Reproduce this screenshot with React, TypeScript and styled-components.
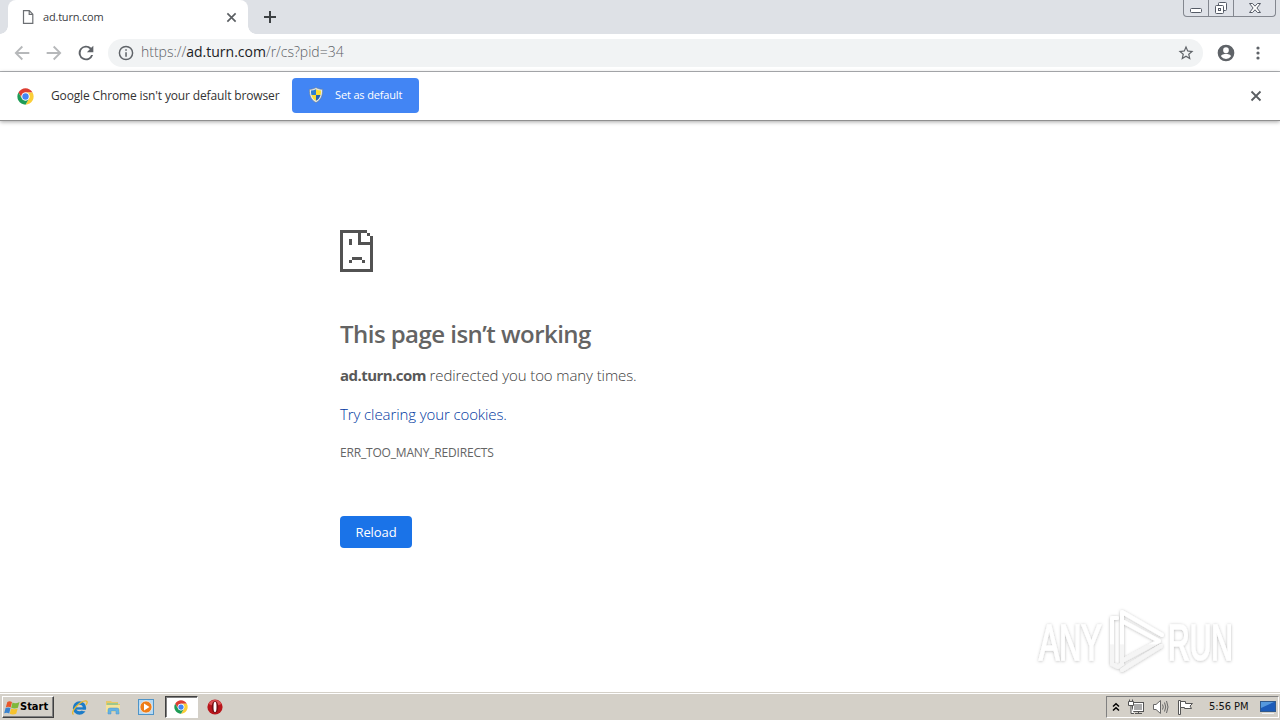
import React, { ReactNode } from "react";
import styled, { createGlobalStyle, css } from "styled-components";

const uiFont = `"Open Sans", "Noto Sans", sans-serif`;
const tahoma = `"DejaVu Sans Condensed", "DejaVu Sans", sans-serif`;

const GlobalStyle = createGlobalStyle`
    * {
        box-sizing: border-box;
    }

    body {
        margin: 0;
        overflow: hidden;
        background: #fff;
        font-family: ${uiFont};
    }

    svg {
        display: block;
        flex: none;
    }
`;

const Screen = styled.div`
    width: 1280px;
    height: 720px;
    position: relative;
    display: flex;
    flex-direction: column;
    background: #fff;
`;

const Label = styled.span<{ $size: number; $spacing?: number }>`
    ${({ $size, $spacing = 0 }) => css`
        font-size: ${$size}px;
        letter-spacing: ${$spacing}px;
        line-height: 1.36;
        white-space: nowrap;
    `}
`;

/* Tab strip */

const TabStrip = styled.header`
    flex: none;
    height: 34px;
    padding-left: 8px;
    display: flex;
    background: #dee1e6;
`;

const Tab = styled.div`
    position: relative;
    width: 240px;
    height: 34px;
    padding: 0 11px 0 14px;
    display: flex;
    align-items: center;
    border-radius: 8px 8px 0 0;
    background: #fff;
    color: #3c4043;

    &::before,
    &::after {
        content: "";
        position: absolute;
        bottom: 0;
        width: 8px;
        height: 8px;
    }

    &::before {
        left: -8px;
        background: radial-gradient(circle at 0 0, transparent 7.5px, #fff 8px);
    }

    &::after {
        right: -8px;
        background: radial-gradient(
            circle at 100% 0,
            transparent 7.5px,
            #fff 8px
        );
    }
`;

const TabTitle = styled(Label)`
    flex: 1;
    margin-left: 9px;
`;

const NewTab = styled.div`
    margin: 10px 0 0 15px;
`;

const WindowControls = styled.div`
    width: 93px;
    height: 17px;
    margin: 0 4px 0 auto;
    display: flex;
    border: 1px solid #83878f;
    border-top: 0;
    border-radius: 0 0 4px 4px;
    background: #dfe2e8;
`;

const WindowButton = styled.div<{ $width: number }>`
    width: ${({ $width }) => $width}px;
    display: flex;
    justify-content: center;

    & + & {
        border-left: 1px solid #83878f;
    }
`;

/* Toolbar */

const Toolbar = styled.nav`
    flex: none;
    height: 38px;
    padding: 0 14px;
    display: flex;
    align-items: center;
    border-bottom: 1px solid #b1b3b6;
    background: #fff;
`;

const NavButtons = styled.div`
    width: 94px;
    display: flex;
    gap: 16px;
`;

const Omnibox = styled.div`
    width: 1095px;
    height: 28px;
    padding: 0 8px 0 10px;
    display: flex;
    align-items: center;
    border-radius: 14px;
    background: #f1f3f4;
`;

const Url = styled(Label)`
    flex: 1;
    margin: 0 0 1px 7px;
    color: #5c6065;
    font-weight: 300;

    b {
        font-weight: 400;
        color: #202124;
    }
`;

const ToolbarActions = styled.div`
    margin-left: auto;
    display: flex;
    align-items: center;
    gap: 14px;
`;

/* Default browser bar */

const InfoBar = styled.div`
    flex: none;
    height: 49px;
    padding: 0 18px 0 17px;
    display: flex;
    align-items: center;
    border-bottom: 1px solid #8f8f8f;
    box-shadow: 0 1px 4px rgba(0, 0, 0, 0.35);
    background: #fff;
    color: #333;
`;

const InfoText = styled(Label)`
    width: 241px;
    margin-left: 17px;
`;

const DefaultButton = styled.button`
    width: 127px;
    height: 35px;
    margin-bottom: 2px;
    padding: 0 0 0 16px;
    display: flex;
    align-items: center;
    gap: 11px;
    border: 0;
    border-radius: 4px;
    background: #4285f4;
    color: #fff;
    font-family: inherit;
`;

const InfoClose = styled.div`
    margin-left: auto;
`;

/* Error page */

const ErrorPage = styled.main`
    flex: 1;
    padding: 109px 0 0 340px;
    display: flex;
    flex-direction: column;
    align-items: flex-start;
    color: #646464;
`;

const Title = styled.h1`
    margin: 46px 0 0;
    font-size: 24px;
    font-weight: 600;
    line-height: 32px;
    letter-spacing: -0.54px;
    white-space: nowrap;
`;

const Paragraph = styled.p<{ $top: number; $spacing: number }>`
    margin: ${({ $top }) => $top}px 0 0;
    color: #3c3c3c;
    font-size: 15px;
    font-weight: 300;
    line-height: 22px;
    letter-spacing: ${({ $spacing }) => $spacing}px;
    white-space: nowrap;
`;

const Host = styled.strong`
    color: #585858;
    font-weight: 700;
    letter-spacing: -0.55px;
`;

const CookiesLink = styled.a`
    color: #0038a0;
`;

const ErrorCode = styled.div`
    margin-top: 19px;
    font-size: 12px;
    line-height: 18px;
    letter-spacing: -0.18px;
`;

const ReloadButton = styled.button`
    width: 72px;
    height: 32px;
    margin-top: 54px;
    padding: 0;
    border: 0;
    border-radius: 4px;
    background: #1a73e8;
    color: #fff;
    font-family: inherit;
    font-size: 13px;
    letter-spacing: -0.1px;
`;

const Watermark = styled.div`
    position: absolute;
    left: 1030px;
    top: 604px;
`;

/* Taskbar */

const TaskbarRoot = styled.footer`
    flex: none;
    height: 28px;
    padding: 1px 0 0 2px;
    display: flex;
    align-items: center;
    border-top: 1px solid #d4d0c8;
    box-shadow: inset 0 1px #fff;
    background: #d4d0c8;
`;

const StartButton = styled.div`
    width: 52px;
    height: 22px;
    padding: 1px 0 0 1px;
    display: flex;
    align-items: center;
    border: 1px solid;
    border-color: #fff #404040 #404040 #fff;
    box-shadow: inset -1px -1px #808080;
    color: #000;
    font-family: ${tahoma};
    font-weight: 700;
`;

const QuickLaunch = styled.div`
    margin-left: 9px;
    display: flex;
    align-items: center;
`;

const TaskItem = styled.div<{ $active?: boolean }>`
    width: 33px;
    height: 22px;
    display: flex;
    align-items: center;
    justify-content: center;

    ${({ $active }) =>
        $active &&
        css`
            margin-left: 3px;
            padding-right: 2px;
            border: 1px solid;
            border-color: #404040 #fff #fff #404040;
            box-shadow: inset 1px 1px #808080;
            background: #fff;
        `}
`;

const Tray = styled.div`
    width: 173px;
    height: 22px;
    margin: 0 1px 0 auto;
    padding-left: 5px;
    display: flex;
    align-items: center;
    border: 1px solid;
    border-color: #808080 #fff #fff #808080;
    color: #111;
`;

const TrayIcons = styled.div`
    width: 97px;
    display: flex;
    align-items: center;
    gap: 8px;
`;

const Clock = styled(Label)`
    width: 51px;
    padding-top: 1px;
    font-family: ${tahoma};
`;

interface IconProps {
    size?: number;
    color?: string;
    children: ReactNode;
}

const Icon = ({ size = 16, color = "#5f6368", children }: IconProps) => (
    <svg width={size} height={size} viewBox="0 0 24 24" fill={color}>
        {children}
    </svg>
);

const CrossIcon = ({ size, width }: { size: number; width: number }) => (
    <svg width={size} height={size} viewBox="0 0 12 12">
        <path
            d="M1.5 1.5l9 9M10.5 1.5l-9 9"
            stroke="#5a5e62"
            strokeWidth={width}
        />
    </svg>
);

const ChromeIcon = ({ size = 17 }: { size?: number }) => (
    <svg width={size} height={size} viewBox="0 0 48 48">
        <circle cx="24" cy="24" r="23" fill="#fff" />
        <path
            d="M4.1 12.5A23 23 0 0 1 43.9 12.5H24A11.5 11.5 0 0 0 14 29.8Z"
            fill="#dd3e32"
        />
        <path
            d="M43.9 12.5A23 23 0 0 1 24 47L34 29.8A11.5 11.5 0 0 0 24 12.5Z"
            fill="#fbce38"
        />
        <path
            d="M24 47A23 23 0 0 1 4.1 12.5L14 29.8A11.5 11.5 0 0 0 34 29.8Z"
            fill="#1e9c56"
        />
        <circle cx="24" cy="24" r="11" fill="#fff" />
        <circle cx="24" cy="24" r="9" fill="#4285f4" />
    </svg>
);

const ShieldIcon = () => (
    <svg width="16" height="16" viewBox="0 0 16 16">
        <path
            d="M8 .5C6 1.700 4 2.200 1.400 2.300 1.300 8 2.500 12.800 8 15.600 13.500 12.800 14.700 8 14.600 2.300 12 2.200 10 1.700 8 .5Z"
            fill="#e4e8ea"
            stroke="#66798c"
            strokeWidth=".6"
        />
        <path d="M8 2.200C6.300 3.100 4.700 3.500 3 3.600 2.900 5 3 6.500 3.400 8H8Z" fill="#2d7fd1" />
        <path d="M8 2.200C9.700 3.100 11.300 3.500 13 3.600 13.100 5 13 6.500 12.600 8H8Z" fill="#fadd32" />
        <path d="M3.500 8H8V13.800C5.600 12.500 4.200 10.700 3.500 8Z" fill="#fadd32" />
        <path d="M12.500 8H8V13.800C10.400 12.500 11.800 10.700 12.500 8Z" fill="#2464b4" />
    </svg>
);

const SadPageIcon = () => (
    <svg
        width="33"
        height="42"
        viewBox="0 0 33 42"
        fill="#525252"
        shapeRendering="crispEdges"
    >
        <path d="M0 0H27V3H0ZM0 0H3V42H0ZM0 39H33V42H0ZM30 6H33V42H30Z" />
        <path d="M18 3H21V15H18ZM18 12H33V15H18ZM27 3H30V6H27Z" />
        <path d="M9 9H12V15H9ZM12 27H22V30H12ZM9 30H12V33H9ZM22 30H25V33H22Z" />
    </svg>
);

const WindowButtons = () => (
    <WindowControls>
        <WindowButton $width={24}>
            <svg width="14" height="16" viewBox="0 0 14 16">
                <rect x="1.500" y="8.500" width="11" height="4" rx="1" fill="#fff" stroke="#555b66" />
            </svg>
        </WindowButton>
        <WindowButton $width={25}>
            <svg width="14" height="16" viewBox="0 0 14 16" fill="#fff" stroke="#555b66">
                <rect x="4.500" y="2.500" width="8" height="8" rx="1" />
                <rect x="1.500" y="5.500" width="8" height="8" rx="1" />
                <rect x="4.500" y="8.500" width="2" height="2" />
            </svg>
        </WindowButton>
        <WindowButton $width={42}>
            <svg width="14" height="16" viewBox="0 0 14 16">
                <path
                    d="M1.500 3.500H4.500L7 6.200 9.500 3.500H12.500L8.900 8 12.500 12.500H9.500L7 9.800 4.500 12.500H1.500L5.100 8Z"
                    fill="#fff"
                    stroke="#555b66"
                />
            </svg>
        </WindowButton>
    </WindowControls>
);

const BrowserToolbar = () => (
    <Toolbar>
        <NavButtons>
            <Icon color="#b6b8ba">
                <path d="M23 10.600H6.200l7.300-7.300L11.500 1.300 .8 12l10.700 10.700 2-2-7.300-7.300H23z" />
            </Icon>
            <Icon color="#b6b8ba">
                <path d="M1 10.600h16.800l-7.300-7.300 2-2L23.200 12 12.500 22.700l-2-2 7.300-7.300H1z" />
            </Icon>
            <Icon>
                <path d="M19.800 4.200A11 11 0 1 0 22.600 15h-3A8.100 8.100 0 1 1 12 3.900c2.200 0 4.200.9 5.700 2.400L13.300 10.700H23V1z" />
            </Icon>
        </NavButtons>
        <Omnibox>
            <Icon>
                <path d="M12 1a11 11 0 1 0 0 22 11 11 0 0 0 0-22zm0 19.800a8.800 8.800 0 1 1 0-17.600 8.800 8.800 0 0 1 0 17.600zM10.900 10.900h2.300v6.600h-2.300zM10.900 6.500h2.300v2.200h-2.300z" />
            </Icon>
            <Url $size={14} $spacing={-0.01}>
                https://<b>ad.turn.com</b>/r/cs?pid=34
            </Url>
            <Icon size={18}>
                <path d="M22 9.240l-7.190-.62L12 2 9.190 8.630 2 9.240l5.460 4.730L5.820 21 12 17.270 18.180 21l-1.630-7.030zM12 15.400l-3.760 2.270 1-4.280-3.320-2.880 4.380-.38L12 6.100l1.710 4.040 4.380.38-3.320 2.880 1 4.280z" />
            </Icon>
        </Omnibox>
        <ToolbarActions>
            <Icon size={20}>
                <path d="M12 2a10 10 0 1 0 0 20 10 10 0 0 0 0-20zm0 3.200a3.400 3.400 0 1 1 0 6.800 3.400 3.400 0 0 1 0-6.800zm0 13.900a7.200 7.200 0 0 1-6-3.200c0-2 4-3.100 6-3.100s6 1.100 6 3.100a7.200 7.200 0 0 1-6 3.200z" />
            </Icon>
            <svg width="16" height="16" viewBox="0 0 16 16" fill="#5f6368">
                <circle cx="8" cy="3" r="1.600" />
                <circle cx="8" cy="8" r="1.600" />
                <circle cx="8" cy="13" r="1.600" />
            </svg>
        </ToolbarActions>
    </Toolbar>
);

const AnyRunLogo = () => (
    <svg width="220" height="76" viewBox="0 0 220 76">
        <defs>
            <filter id="glow" x="-10%" y="-20%" width="120%" height="140%">
                <feDropShadow dx="0" dy="0.5" stdDeviation="1.8" floodColor="#000" floodOpacity=".28" />
            </filter>
            <linearGradient id="fade" x1="0" y1="0" x2="0" y2="76" gradientUnits="userSpaceOnUse">
                <stop offset=".52" stopColor="#fff" />
                <stop offset=".54" stopColor="#f5f5f5" />
            </linearGradient>
        </defs>
        <g
            filter="url(#glow)"
            fill="url(#fade)"
            stroke="url(#fade)"
            strokeWidth="1.6"
            fontFamily="'Liberation Sans', sans-serif"
            fontSize="50"
        >
            <text transform="translate(9 56) scale(.61 1)">ANY</text>
            <text transform="translate(138 56) scale(.6 1)">RUN</text>
        </g>
        <g
            filter="url(#glow)"
            fill="none"
            stroke="url(#fade)"
            strokeWidth="4"
            strokeLinejoin="round"
            strokeLinecap="round"
        >
            <path d="M92 60V8L132 31" />
            <path d="M87 14H82V60L88 63L92 60" />
            <path d="M92 17L129 37L92 57" />
            <path d="M92 66L131 42" />
        </g>
    </svg>
);

const WindowsFlag = () => (
    <svg width="16" height="16" viewBox="0 0 16 16">
        <path d="M3.300 2C5 1 6.500 1.200 8 2.100L6.700 7.600C5.200 6.700 3.500 6.600 1.800 7.400Z" fill="#e9572b" />
        <path d="M8.500 2.500C10.200 3.400 12.500 3.500 15.500 2L13.900 7.800C11.500 8.900 9.200 8.800 7.200 7.800Z" fill="#7fb83a" />
        <path d="M1.600 8C3.400 7.200 5 7.200 6.500 8.100L5.200 13.500C3.700 12.600 2 12.500 .2 13.300Z" fill="#3a83cf" />
        <path d="M7.100 8.400C9 9.400 11.300 9.400 13.700 8.400L12.200 13.800C9.900 14.900 7.700 14.800 5.800 13.800Z" fill="#f6c22c" />
    </svg>
);

const ExplorerIcon = () => (
    <svg width="17" height="17" viewBox="0 0 17 17">
        <circle cx="8.500" cy="9" r="5" fill="none" stroke="#1c7cc8" strokeWidth="3.400" />
        <path d="M5 8.300H14.500V10.600H5Z" fill="#1c7cc8" />
        <path d="M10.500 10.700H15V12.500L11.500 12Z" fill="#d4d0c8" />
        <path d="M2.500 15.500C-1.500 13.500 9 1.500 15 1.800 17 2.200 16 4.500 15 6" fill="none" stroke="#e9b92e" strokeWidth="1.300" />
    </svg>
);

const FolderIcon = () => (
    <svg width="16" height="16" viewBox="0 0 16 16">
        <path d="M1 2H6L7 3H13V5H15V13H1Z" fill="#e7c867" />
        <path d="M2 4H13V6H2Z" fill="#9dc78c" />
        <path d="M1 6H15V13H1Z" fill="#f5e39a" />
        <path d="M3 15V11Q3 9 5 9H12Q14 9 14 11V15H11V12H6V15Z" fill="#65b2e3" stroke="#4b94c9" strokeWidth=".5" />
    </svg>
);

const PlayerIcon = () => (
    <svg width="16" height="16" viewBox="0 0 16 16">
        <rect x=".5" y=".5" width="15" height="15" fill="#b7d9f2" stroke="#4e94c8" />
        <circle cx="8" cy="8" r="6" fill="#ee7d18" stroke="#fff" strokeWidth=".6" />
        <path d="M6 4.500L11.500 8 6 11.500Z" fill="#fff" />
    </svg>
);

const OperaIcon = () => (
    <svg width="16" height="16" viewBox="0 0 16 16">
        <circle cx="8" cy="8" r="7.600" fill="#b9151b" />
        <path d="M1.500 5A7.200 7.200 0 0 1 14.500 5Q8 8 1.500 5Z" fill="#dc5355" />
        <ellipse cx="8" cy="8" rx="3.300" ry="6" fill="#731014" />
        <ellipse cx="8" cy="8" rx="1.500" ry="5.200" fill="#fff" />
    </svg>
);

const TraySection = () => (
    <Tray>
        <TrayIcons>
            <svg width="8" height="11" viewBox="0 0 8 11" fill="none" stroke="#000" strokeWidth="1.500">
                <path d="M1 4.500L4 1.700 7 4.500M1 8.500L4 5.700 7 8.500" />
            </svg>
            <svg width="16" height="16" viewBox="0 0 16 16" stroke="#555" fill="#fff">
                <rect x="4.500" y="3.500" width="11" height="9" />
                <path d="M6 5H14V11H6Z" fill="#aaa" stroke="none" />
                <path d="M7 14.500H14M10.500 12.500V14.500" />
                <path d="M.5 2.500H5.500V6.500H.5ZM1.500 .5V2.500M4.500 .5V2.500M3 6.500V14.500H6" />
            </svg>
            <svg width="17" height="16" viewBox="0 0 17 16" stroke="#666" fill="#fff">
                <path d="M1.500 5.500H4L8.500 1.500V14.500L4 10.500H1.500Z" />
                <path d="M10.500 5.500Q12 8 10.500 10.500M12.500 3.500Q15 8 12.500 12.500M14.500 2Q17.500 8 14.500 14" fill="none" />
            </svg>
            <svg width="16" height="16" viewBox="0 0 16 16" stroke="#555" fill="#fff">
                <path d="M1.500 1.500H3.500V15.500H1.500Z" />
                <path d="M3.500 2.500H8.500V4.500H15.500L13 7L14.500 9.500H7.500V8.500H3.500Z" />
            </svg>
        </TrayIcons>
        <Clock $size={11} $spacing={-0.05}>
            5:56 PM
        </Clock>
        <svg width="16" height="16" viewBox="0 0 16 16">
            <rect x=".5" y="2.500" width="15" height="10" fill="#1d5cb9" stroke="#315a8b" />
            <path d="M1 3H14L1 9Z" fill="#5699dd" />
            <path d="M2 14.500H14" stroke="#eef3f7" />
        </svg>
    </Tray>
);

const Taskbar = () => (
    <TaskbarRoot>
        <StartButton>
            <WindowsFlag />
            <Label $size={11} $spacing={0}>
                Start
            </Label>
        </StartButton>
        <QuickLaunch>
            <TaskItem>
                <ExplorerIcon />
            </TaskItem>
            <TaskItem>
                <FolderIcon />
            </TaskItem>
            <TaskItem>
                <PlayerIcon />
            </TaskItem>
            <TaskItem $active>
                <ChromeIcon size={14} />
            </TaskItem>
            <TaskItem>
                <OperaIcon />
            </TaskItem>
        </QuickLaunch>
        <TraySection />
    </TaskbarRoot>
);

const App = () => (
    <Screen>
        <GlobalStyle />
        <TabStrip>
            <Tab>
                <svg width="12" height="14" viewBox="0 0 12 14">
                    <path
                        d="M1.500 .7H7.300L10.800 4.200V13.300H1.500ZM7.200 .7V4.300H10.800"
                        fill="#fff"
                        stroke="#6c6f73"
                        strokeWidth="1.200"
                    />
                </svg>
                <TabTitle $size={11} $spacing={-0.2}>
                    ad.turn.com
                </TabTitle>
                <CrossIcon size={11} width={1.8} />
            </Tab>
            <NewTab>
                <svg width="14" height="14" viewBox="0 0 14 14">
                    <path d="M7 1V13M1 7H13" stroke="#3c4043" strokeWidth="2" />
                </svg>
            </NewTab>
            <WindowButtons />
        </TabStrip>
        <BrowserToolbar />
        <InfoBar>
            <ChromeIcon />
            <InfoText $size={12} $spacing={-0.14}>
                Google Chrome isn't your default browser
            </InfoText>
            <DefaultButton>
                <ShieldIcon />
                <Label $size={11} $spacing={-0.15}>
                    Set as default
                </Label>
            </DefaultButton>
            <InfoClose>
                <CrossIcon size={12} width={1.8} />
            </InfoClose>
        </InfoBar>
        <ErrorPage>
            <SadPageIcon />
            <Title>This page isn’t working</Title>
            <Paragraph $top={14} $spacing={-0.1}>
                <Host>ad.turn.com</Host> redirected you too many times.
            </Paragraph>
            <Paragraph $top={17} $spacing={-0.1}>
                <CookiesLink>Try clearing your cookies.</CookiesLink>
            </Paragraph>
            <ErrorCode>ERR_TOO_MANY_REDIRECTS</ErrorCode>
            <ReloadButton>Reload</ReloadButton>
        </ErrorPage>
        <Watermark>
            <AnyRunLogo />
        </Watermark>
        <Taskbar />
    </Screen>
);

export default App;
